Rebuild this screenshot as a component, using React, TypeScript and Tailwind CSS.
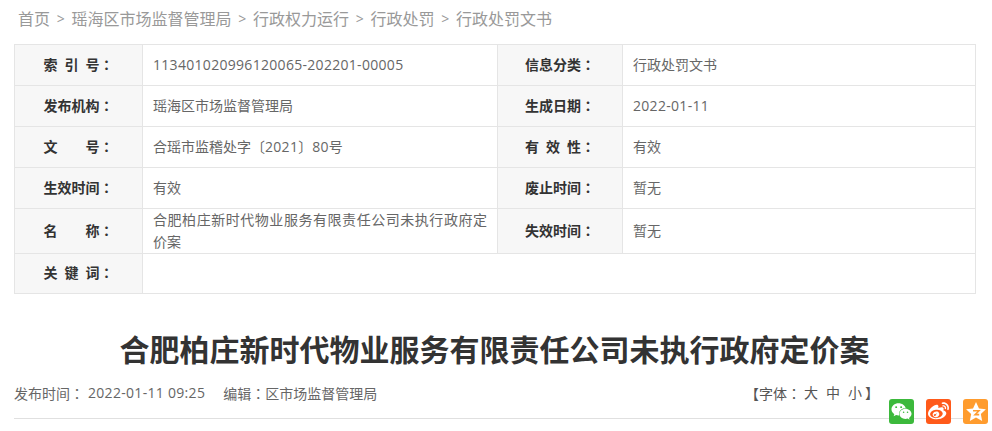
import { FaWeibo, FaWeixin } from "react-icons/fa";

const crumbs = ["首页", "瑶海区市场监督管理局", "行政权力运行", "行政处罚", "行政处罚文书"];

const labelClass =
  "bg-[#f7f7f7] border border-[#e5e5e5] text-center text-[14px] font-bold text-[#333] whitespace-pre p-0 pb-[2px] [word-spacing:3.4px]";
const cellClass = "border border-[#e5e5e5] text-[14px] text-[#666] pl-[10px] pr-[10px] pt-0";
const valueClass = `${cellClass} pb-[2px]`;

// the source font centres the full-width colon, the TC cut of Noto does as well
function Colon() {
  return <span className="font-['Noto_Sans_CJK_TC']">：</span>;
}

export default function App() {
  return (
    <div
      className="relative h-[431px] w-[992px] overflow-hidden bg-white"
      style={{ fontFamily: '"Open Sans", "Noto Sans CJK SC", sans-serif' }}
    >
      <div className="flex h-[38px] items-center pb-[1px] pl-[18px] text-[16px] text-[#999]">
        {crumbs.map((c, i) => (
          <span key={c} className="flex items-center">
            {i > 0 && <span className="w-[21.5px] text-center text-[14px]">&gt;</span>}
            {c}
          </span>
        ))}
      </div>

      <table className="mt-[6px] ml-[14px] w-[962px] table-fixed border-collapse">
        <colgroup>
          <col className="w-[128px]" />
          <col className="w-[355px]" />
          <col className="w-[125px]" />
          <col />
        </colgroup>
        <tbody>
          <tr className="h-[41px]">
            <td className={labelClass}>索 引 号<Colon /></td>
            <td className={`${valueClass} tracking-[0.3px]`}>113401020996120065-202201-00005</td>
            <td className={labelClass}>信息分类<Colon /></td>
            <td className={valueClass}>行政处罚文书</td>
          </tr>
          <tr className="h-[41px]">
            <td className={labelClass}>发布机构<Colon /></td>
            <td className={valueClass}>瑶海区市场监督管理局</td>
            <td className={labelClass}>生成日期<Colon /></td>
            <td className={`${valueClass} tracking-[0.3px]`}>2022-01-11</td>
          </tr>
          <tr className="h-[41px]">
            <td className={labelClass}>文{"　　"}号<Colon /></td>
            <td className={valueClass}>
              合瑶市监稽处字〔<span className="tracking-[0.3px]">2021</span>〕<span className="tracking-[0.3px]">80</span>号
            </td>
            <td className={labelClass}>有 效 性<Colon /></td>
            <td className={valueClass}>有效</td>
          </tr>
          <tr className="h-[41px]">
            <td className={labelClass}>生效时间<Colon /></td>
            <td className={valueClass}>有效</td>
            <td className={labelClass}>废止时间<Colon /></td>
            <td className={valueClass}>暂无</td>
          </tr>
          <tr className="h-[45px]">
            <td className={labelClass}>名{"　　"}称<Colon /></td>
            <td className={`${cellClass} pb-0 text-justify leading-[22px]`}>合肥柏庄新时代物业服务有限责任公司未执行政府定价案</td>
            <td className={labelClass}>失效时间<Colon /></td>
            <td className={valueClass}>暂无</td>
          </tr>
          <tr className="h-[40px]">
            <td className={labelClass}>关 键 词<Colon /></td>
            <td className={valueClass} colSpan={3}></td>
          </tr>
        </tbody>
      </table>

      <h1 className="mt-[34px] pr-[3px] text-center text-[30px] leading-[44px] font-bold text-[#333]">
        合肥柏庄新时代物业服务有限责任公司未执行政府定价案
      </h1>

      <div className="mx-[14px] mt-[10px] flex h-[37px] items-start justify-between border-b border-[#e0e0e0] text-[14px] leading-[22px] text-[#666]">
        <div className="flex">
          <span>发布时间<Colon /></span>
          <span className="ml-[4px] tracking-[0.3px]">2022-01-11 09:25</span>
          <span className="ml-[18px]">编辑<Colon />区市场监督管理局</span>
        </div>
        <div className="mr-[99px] flex text-[#555]">
          <span>【字体<Colon /></span>
          <span className="ml-[3px]">大</span>
          <span className="ml-[8px]">中</span>
          <span className="ml-[8px]">小</span>
          <span className="ml-[3px]">】</span>
        </div>
      </div>

      <div className="absolute top-[399px] left-[889px] flex gap-[12px]">
        <div className="flex h-[25px] w-[25px] items-center justify-center rounded-[3px] bg-[#3cb93c] text-white">
          <FaWeixin size={21} />
        </div>
        <div className="flex h-[25px] w-[25px] items-center justify-center rounded-[3px] bg-[#ff5a1a] text-white">
          <FaWeibo size={21} />
        </div>
        <div className="flex h-[25px] w-[25px] items-center justify-center rounded-[3px] bg-[#ff9c2e]">
          <svg width="22" height="22" viewBox="0 0 20 20">
            <path
              d="M10 1l2.700 5.800 6.300.8-4.600 4.300 1.200 6.300L10 15l-5.600 3.200 1.200-6.300L1 7.600l6.300-.8z"
              fill="#fff"
            />
            <path d="M7.300 8.800h5.400l-3.600 3.600h3.800" fill="none" stroke="#ff9c2e" strokeWidth="1.400" />
          </svg>
        </div>
      </div>
    </div>
  );
}
